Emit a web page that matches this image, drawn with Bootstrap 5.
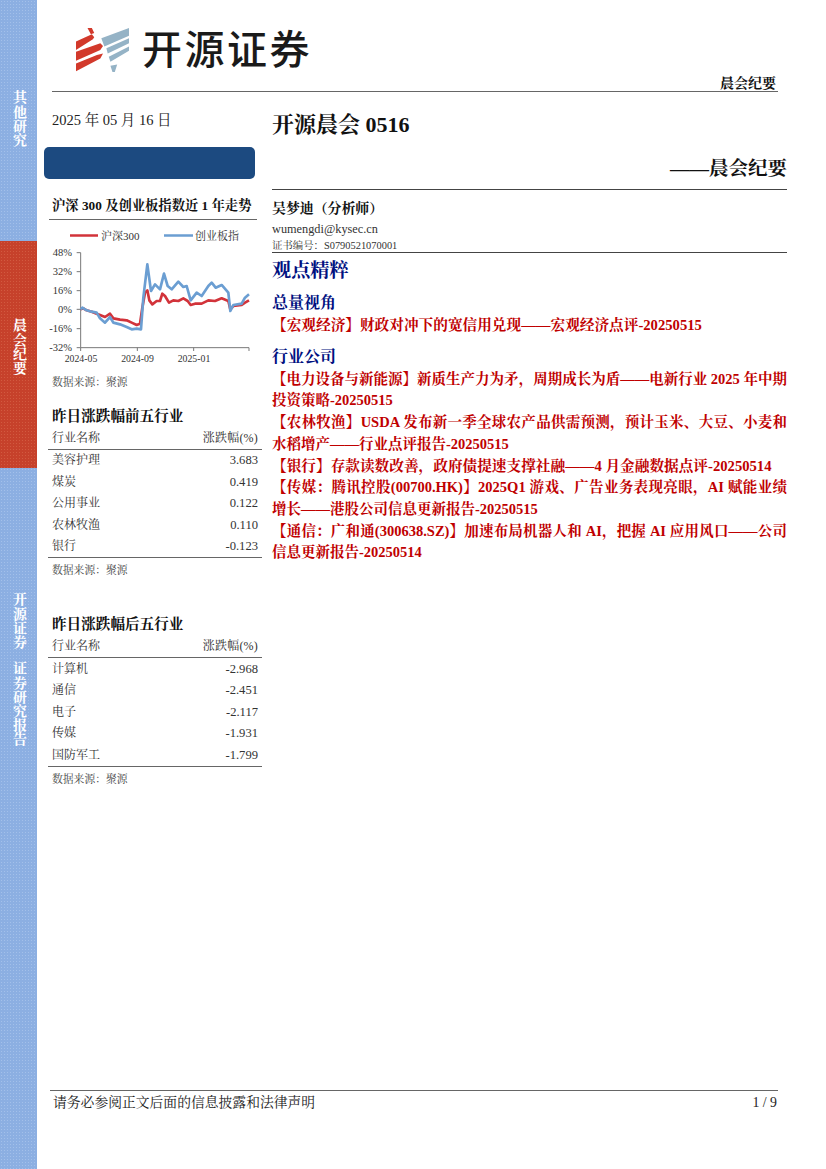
<!doctype html>
<html lang="zh-CN">
<head>
<meta charset="utf-8">
<title>开源晨会 0516</title>
<link href="https://cdn.jsdelivr.net/npm/bootstrap@5.3.0/dist/css/bootstrap.min.css" rel="stylesheet">
<style>
html,body{margin:0;height:100%;}
body{width:826px;height:1169px;overflow:hidden;background:#fff;color:#222;font-family:"Liberation Serif","Noto Serif CJK SC","Noto Sans CJK SC",serif;}
.page-shell{height:1169px;}
.side-rail{width:37px;flex:none;height:1169px;}
.rail-seg{color:#fff;font-weight:700;font-size:14px;text-align:center;background-size:3px 3px;}
.rail-blue{background-color:#8cafe2;background-image:radial-gradient(#a3c0ea 35%,transparent 40%);}
.rail-red{background-color:#c6412b;background-image:radial-gradient(#d25a40 35%,transparent 40%);}
.rail-a{height:241px;padding-top:90px;}
.rail-b{height:227px;padding-top:77px;}
.rail-c{height:701px;padding-top:124px;}
.rail-text{writing-mode:vertical-rl;text-orientation:upright;letter-spacing:.2px;line-height:37px;display:inline-block;}
.rail-gap{margin-top:12px;}
.main-area{width:789px;flex:none;position:relative;}
.top-head{height:92px;margin:0 48px 0 15px;border-bottom:1.5px solid #666;position:relative;}
.logo-row{padding:26px 0 0 24px;height:74px;gap:13px;}
.logo-svg{flex:none;}
.logo-word{font-family:"Noto Sans CJK SC",sans-serif;font-weight:500;font-size:40px;line-height:48px;letter-spacing:2.5px;color:#1a1a1a;margin-top:-6px;}
.head-tag{position:absolute;right:2px;bottom:-1px;font-weight:700;font-size:14px;line-height:17px;color:#111;}
.body-cols{height:998px;}
.left-col{width:218px;margin-left:7px;flex:none;}
.right-col{width:515px;margin-left:10px;flex:none;}
.date-line{padding:19px 0 0 8px;height:55px;font-size:14.5px;line-height:18px;}
.blue-box{width:211px;height:32px;background:#1c4a80;border-radius:5px;}
.left-title{font-weight:700;font-size:14.6px;line-height:17px;color:#111;padding-left:8px;white-space:nowrap;}
.chart-head{font-size:13.3px;margin:18px 5px 0 5px;padding:0 0 5px 3px;border-bottom:1.5px solid #666;}
.chart-svg{display:block;width:214px;height:143px;margin:3px 0 0 2px;}
.chart-svg text{font-family:"Liberation Serif","Noto Serif CJK SC","Noto Sans CJK SC",serif;font-size:10.5px;fill:#333;}
.chart-svg .tick-x{font-size:9.8px;}
.chart-svg .leg-t{font-size:11px;}
.src-note{font-size:10.8px;line-height:14px;color:#444;padding-left:8px;}
.note-a{margin-top:9px;}
.block-a{margin-top:19px;}
.block-b{margin-top:39px;}
.rank-table{width:214px;margin:3px 0 0 4px;font-size:12px;color:#333;--bs-table-bg:transparent;}
.rank-table th,.rank-table td{padding:0 4px;height:21.7px;line-height:21px;font-weight:400;border:0;vertical-align:middle;color:#333;}
.rank-table thead th{height:21px;border-bottom:1.5px solid #666;}
.rank-table td:last-child,.rank-table th:last-child{text-align:right;font-size:12.6px;}
.rank-table tbody tr:last-child td{border-bottom:1.5px solid #666;}
.rank-table th:last-child{font-size:12px;letter-spacing:.2px;}
.note-t{margin-top:5px;}
.rpt-title{font-weight:700;font-size:22px;line-height:26px;color:#111;padding-top:20px;height:60px;}
.rpt-kind{font-weight:700;font-size:19.5px;line-height:24px;text-align:right;color:#111;margin-top:5px;border-bottom:1.5px solid #444;padding-bottom:8px;box-sizing:content-box;height:24px;}
.auth-name{font-weight:700;font-size:13.9px;line-height:18px;color:#111;margin-top:10px;}
.auth-mail{font-size:12.3px;line-height:18px;color:#333;margin-top:2px;}
.auth-cert{font-size:10.4px;line-height:13px;color:#333;padding-top:1px;border-bottom:1.5px solid #444;}
.sec-big{font-weight:700;font-size:19.2px;line-height:22px;color:#00107f;margin-top:7px;}
.sec-small{font-weight:700;font-size:16px;line-height:19px;color:#00107f;}
.sec-one{margin-top:11px;}
.sec-two{margin-top:10px;}
.rpt-item{font-weight:700;font-size:14.5px;line-height:21.7px;color:#c00000;text-align:justify;}
.rpt-item.item-single{font-size:14.67px;}
.item-list{margin-top:3px;}
.foot-bar{position:absolute;left:13px;right:48px;top:1090px;border-top:1.5px solid #666;padding:3px 1px 0 3px;font-size:13.8px;line-height:17px;color:#222;}
</style>
</head>
<body>
<div class="d-flex page-shell">
  <div class="side-rail d-flex flex-column">
    <div class="rail-seg rail-blue rail-a"><span class="rail-text">其他研究</span></div>
    <div class="rail-seg rail-red rail-b"><span class="rail-text">晨会纪要</span></div>
    <div class="rail-seg rail-blue rail-c d-flex flex-column align-items-center"><span class="rail-text">开源证券</span><span class="rail-text rail-gap">证券研究报告</span></div>
  </div>
  <div class="main-area">
    <header class="top-head">
      <div class="logo-row d-flex align-items-center">
        <svg class="logo-svg" width="53" height="44" viewBox="228 85 157 130" aria-hidden="true">
          <path fill="#d2392b" d="M262 85h13l7 15-10 3zM228 125l47-22 7 9-4 6-50 32zM228 155l72-25 8 8-8 12-72 32zM228 190l62-25 18-5-8 15-72 38z"/>
          <path fill="#95b3c6" d="M303 115l82-30v23l-73 32zM318 145l67-30v15l-63 30zM325 170l60-30v12l-55 33zM330 197l20-4-7 22h-7z"/>
        </svg>
        <span class="logo-word">开源证券</span>
      </div>
      <div class="head-tag">晨会纪要</div>
    </header>
    <div class="d-flex body-cols">
      <aside class="left-col">
        <div class="date-line">2025 年 05 月 16 日</div>
        <div class="blue-box"></div>
        <div class="left-title chart-head">沪深 300 及创业板指数近 1 年走势</div>
        <svg class="chart-svg" viewBox="46 222 214 143" role="img" aria-label="沪深300及创业板指数走势">
          <line x1="70" y1="234.5" x2="98" y2="234.5" stroke="#d2333a" stroke-width="2.5"/>
          <text class="leg-t" x="101" y="238.5">沪深300</text>
          <line x1="164" y1="234.5" x2="193" y2="234.5" stroke="#6b9ed2" stroke-width="2.5"/>
          <text class="leg-t" x="195" y="238.5">创业板指</text>
          <g transform="translate(45 240) scale(.33333)">
            <g stroke="#777" stroke-width="3" fill="none">
              <path d="M107 35V320H612M95 35H107M95 92H107M95 149H107M95 205H107M95 263H107M95 320H107M107 320V330M277 320V330M446 320V330M612 320V330"/>
            </g>
            <polyline fill="none" stroke="#d2333a" stroke-width="8" stroke-linejoin="round" points="107,205 115,202 125,208 140,212 155,218 165,222 180,228 195,218 205,232 225,236 245,238 260,245 275,252 285,248 292,200 300,155 307,148 313,178 322,190 335,180 345,180 352,158 360,165 372,185 385,178 400,180 415,172 428,180 437,192 450,188 470,188 490,178 510,180 530,172 550,180 556,205 565,195 590,192 600,185 612,178"/>
            <polyline fill="none" stroke="#6b9ed2" stroke-width="8" stroke-linejoin="round" points="107,205 112,200 125,208 140,212 155,215 165,232 180,245 195,228 205,245 225,250 245,258 260,265 275,263 288,265 295,170 307,70 318,150 330,130 345,145 357,98 368,135 380,145 400,122 415,138 425,135 437,178 455,155 470,165 490,135 500,125 512,140 530,132 550,155 556,210 565,192 590,188 600,170 612,160"/>
          </g>
          <g text-anchor="end">
            <text x="72" y="255">48%</text><text x="72" y="274">32%</text><text x="72" y="293">16%</text><text x="72" y="312">0%</text><text x="72" y="331">-16%</text><text x="72" y="350">-32%</text>
          </g>
          <g text-anchor="middle">
            <text class="tick-x" x="81" y="361">2024-05</text><text class="tick-x" x="137.500" y="361">2024-09</text><text class="tick-x" x="194" y="361">2025-01</text>
          </g>
        </svg>
        <div class="src-note note-a">数据来源：聚源</div>
        <section class="block-a">
          <div class="left-title">昨日涨跌幅前五行业</div>
          <table class="table table-borderless rank-table mb-0">
            <thead><tr><th>行业名称</th><th>涨跌幅(%)</th></tr></thead>
            <tbody>
              <tr><td>美容护理</td><td>3.683</td></tr>
              <tr><td>煤炭</td><td>0.419</td></tr>
              <tr><td>公用事业</td><td>0.122</td></tr>
              <tr><td>农林牧渔</td><td>0.110</td></tr>
              <tr><td>银行</td><td>-0.123</td></tr>
            </tbody>
          </table>
          <div class="src-note note-t">数据来源：聚源</div>
        </section>
        <section class="block-b">
          <div class="left-title">昨日涨跌幅后五行业</div>
          <table class="table table-borderless rank-table mb-0">
            <thead><tr><th>行业名称</th><th>涨跌幅(%)</th></tr></thead>
            <tbody>
              <tr><td>计算机</td><td>-2.968</td></tr>
              <tr><td>通信</td><td>-2.451</td></tr>
              <tr><td>电子</td><td>-2.117</td></tr>
              <tr><td>传媒</td><td>-1.931</td></tr>
              <tr><td>国防军工</td><td>-1.799</td></tr>
            </tbody>
          </table>
          <div class="src-note note-t">数据来源：聚源</div>
        </section>
      </aside>
      <main class="right-col">
        <div class="rpt-title">开源晨会 0516</div>
        <div class="rpt-kind">——晨会纪要</div>
        <div class="auth-name">吴梦迪（分析师）</div>
        <div class="auth-mail">wumengdi@kysec.cn</div>
        <div class="auth-cert">证书编号：S0790521070001</div>
        <div class="sec-big">观点精粹</div>
        <div class="sec-small sec-one">总量视角</div>
        <div class="rpt-item item-single item-list">【宏观经济】财政对冲下的宽信用兑现——宏观经济点评-20250515</div>
        <div class="sec-small sec-two">行业公司</div>
        <div class="item-list">
          <div class="rpt-item">【电力设备与新能源】新质生产力为矛，周期成长为盾——电新行业 2025 年中期投资策略-20250515</div>
          <div class="rpt-item">【农林牧渔】USDA 发布新一季全球农产品供需预测，预计玉米、大豆、小麦和水稻增产——行业点评报告-20250515</div>
          <div class="rpt-item item-single">【银行】存款读数改善，政府债提速支撑社融——4 月金融数据点评-20250514</div>
          <div class="rpt-item">【传媒：腾讯控股(00700.HK)】2025Q1 游戏、广告业务表现亮眼，AI 赋能业绩增长——港股公司信息更新报告-20250515</div>
          <div class="rpt-item">【通信：广和通(300638.SZ)】加速布局机器人和 AI，把握 AI 应用风口——公司信息更新报告-20250514</div>
        </div>
      </main>
    </div>
    <div class="foot-bar d-flex justify-content-between"><span>请务必参阅正文后面的信息披露和法律声明</span><span>1 / 9</span></div>
  </div>
</div>
<script src="https://cdn.jsdelivr.net/npm/bootstrap@5.3.0/dist/js/bootstrap.bundle.min.js"></script>
</body>
</html>
